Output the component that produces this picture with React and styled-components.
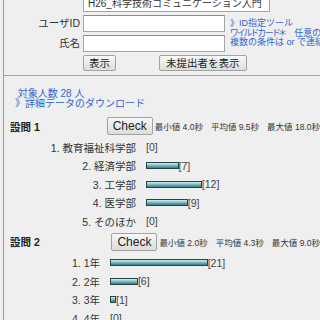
import styled, { createGlobalStyle } from 'styled-components';

const GlobalStyle = createGlobalStyle`
  body {
    margin: 0;
    background: #efefef;
    font-family: "Liberation Sans", "Noto Sans CJK JP", sans-serif;
    color: #333;
  }
`;

const Page = styled.div`
  display: flow-root;
  margin-left: 3px;
  border-left: 1px solid #9d9d9d;
  height: 320px;
  overflow: hidden;
`;

const TopForm = styled.div`
  display: grid;
  grid-template-columns: 76px 142px 1fr;
  grid-template-rows: 20px 17px 17px 16px;
  column-gap: 3px;
  row-gap: 3px;
  margin-top: -8px;
  padding-bottom: 4px;
  border-bottom: 1px solid #a3a3a3;
`;

const Select = styled.div`
  grid-column: 2 / 4;
  width: 187px;
  box-sizing: border-box;
  border: 1px solid #a5a5a5;
  background: #fff;
  padding: 3px 0 0 4px;
  font-size: 10px;
  line-height: 16px;
  white-space: nowrap;
  overflow: hidden;
`;

const Label = styled.div`
  text-align: right;
  font-size: 10.5px;
  line-height: 17px;
  color: #333;
`;

const Input = styled.div`
  box-sizing: border-box;
  border: 1px solid #a5a5a5;
  border-top-color: #8c8c8c;
  background: #fff;
`;

const Hint = styled.div`
  grid-column: 3;
  grid-row: 2 / 4;
  padding: 4px 0 0 2px;
  font-size: 9px;
  line-height: 9.5px;
  color: #2f66d0;
  white-space: nowrap;
`;

const Narrow = styled.span`
  font-feature-settings: "palt";
  letter-spacing: -1px;
`;

const ButtonRow = styled.div`
  grid-column: 2 / 4;
  display: flex;
  gap: 43px;
`;

const Button = styled.button`
  height: ${p => p.$h || 16}px;
  padding: 0 ${p => p.$pad || 5}px;
  border: 1px solid #a2a2a2;
  border-radius: 2px;
  background: linear-gradient(#f8f8f8, #dcdcdc);
  font-family: inherit;
  font-size: ${p => p.$size || 10.5}px;
  color: #222;
  line-height: 1;
`;

const Summary = styled.div`
  padding: 13px 0 0 11px;
  font-size: 10px;
  line-height: 10px;
  color: #3366cc;
  white-space: nowrap;
`;

const Question = styled.div`
  margin-top: ${p => p.$top}px;
`;

const QuestionHeader = styled.div`
  display: flex;
  align-items: center;
  height: 18px;
  padding-left: 6px;
  white-space: nowrap;
`;

const Title = styled.div`
  width: ${p => p.$w}px;
  font-size: 10.5px;
  font-weight: bold;
  color: #222;
`;

const Stats = styled.div`
  margin-left: 2px;
  font-size: 8.5px;
  color: #333;
  display: flex;
  gap: 8px;
`;

const List = styled.div`
  margin-top: 3px;
`;

const Row = styled.div`
  display: flex;
  align-items: center;
  height: 18.5px;
  white-space: nowrap;
`;

const ItemLabel = styled.div`
  width: ${p => p.$w}px;
  box-sizing: border-box;
  padding-right: 10px;
  text-align: right;
  font-size: 10.5px;
  color: #333;
`;

const Value = styled.div`
  display: flex;
  align-items: center;
  font-size: 10.5px;
  color: #444;
`;

const Bar = styled.div`
  height: 7px;
  box-sizing: border-box;
  border: 1px solid #264646;
  background: linear-gradient(#d6eef3 0%, #93cad6 35%, #5f9faa 70%, #3f7a84 100%);
`;

const questions = [
  {
    title: '設問 1',
    titleWidth: 137,
    labelWidth: 142,
    top: 8,
    stats: ['最小値 4.0秒', '平均値 9.5秒', '最大値 18.0秒'],
    items: [
      ['教育福祉科学部', 0],
      ['経済学部', 7],
      ['工学部', 12],
      ['医学部', 9],
      ['そのほか', 0],
    ],
  },
  {
    title: '設問 2',
    titleWidth: 107,
    labelWidth: 106,
    top: 2,
    stats: ['最小値 2.0秒', '平均値 4.3秒', '最大値 9.0秒'],
    items: [
      ['1年', 21],
      ['2年', 6],
      ['3年', 1],
      ['4年', 0],
    ],
  },
];

export default function App() {
  return (
    <>
      <GlobalStyle />
      <Page>
        <TopForm>
          <span />
          <Select>H26_科学技術コミュニケーション入門</Select>
          <Label>ユーザID</Label>
          <Input />
          <Hint>
            》ID指定ツール<br />
            <Narrow>ワイルドカード＊</Narrow>　任意の文字列<br />
            複数の条件は or で連結
          </Hint>
          <Label>氏名</Label>
          <Input />
          <span />
          <ButtonRow>
            <Button>表示</Button>
            <Button $pad={6}>未提出者を表示</Button>
          </ButtonRow>
        </TopForm>

        <Summary>
          <div>&nbsp;対象人数 28 人</div>
          <div>》詳細データのダウンロード</div>
        </Summary>

        {questions.map(q => (
          <Question key={q.title} $top={q.top}>
            <QuestionHeader>
              <Title $w={q.titleWidth}>{q.title}</Title>
              <Button $h={18} $pad={5} $size={12}>Check</Button>
              <Stats>
                {q.stats.map(s => <span key={s}>{s}</span>)}
              </Stats>
            </QuestionHeader>
            <List>
              {q.items.map(([name, count], i) => (
                <Row key={name}>
                  <ItemLabel $w={q.labelWidth}>{i + 1}. {name}</ItemLabel>
                  <Value>
                    {count > 0 && <Bar style={{ width: Math.max(6, count * 4.65) }} />}
                    [{count}]
                  </Value>
                </Row>
              ))}
            </List>
          </Question>
        ))}
      </Page>
    </>
  );
}
